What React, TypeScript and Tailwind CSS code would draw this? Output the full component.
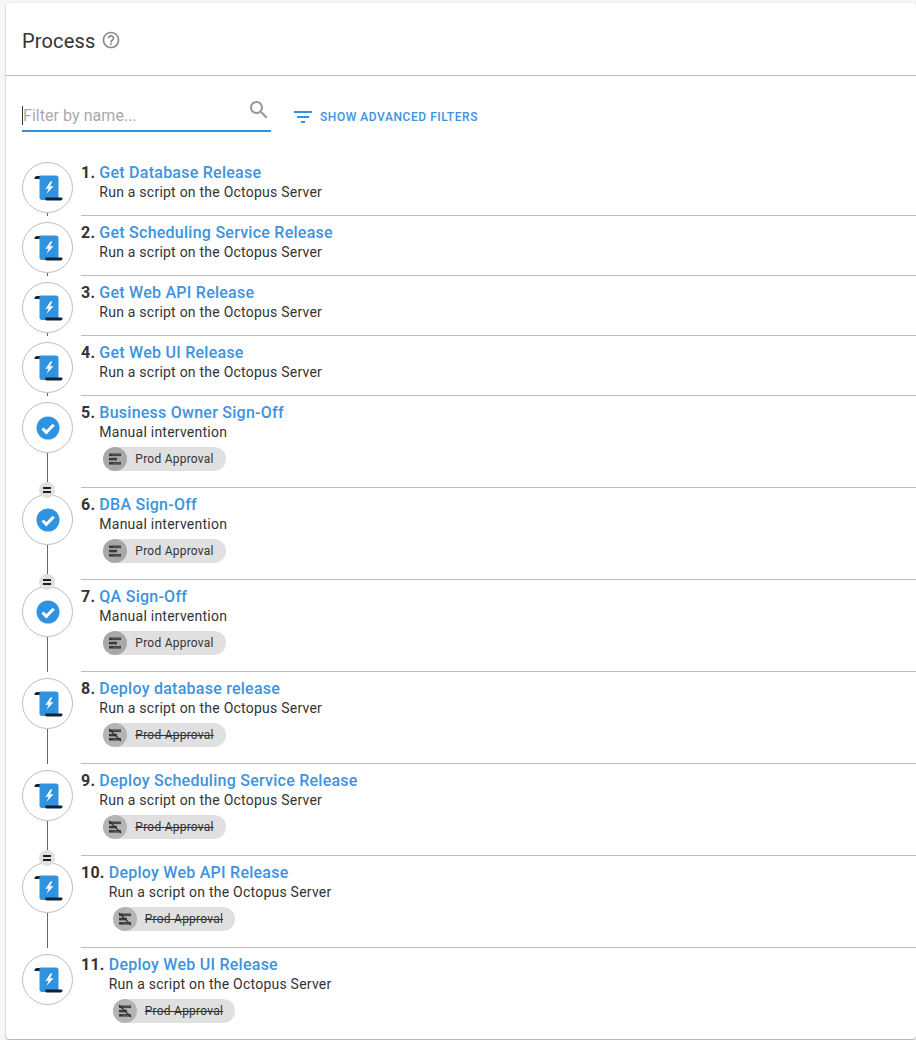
import React from "react";

type Step = { name: string; sub: string; icon: "script" | "manual"; chip?: "on" | "off"; parallel?: boolean };

const SCRIPT = "Run a script on the Octopus Server";
const MANUAL = "Manual intervention";

const steps: Step[] = [
  { name: "Get Database Release", sub: SCRIPT, icon: "script" },
  { name: "Get Scheduling Service Release", sub: SCRIPT, icon: "script" },
  { name: "Get Web API Release", sub: SCRIPT, icon: "script" },
  { name: "Get Web UI Release", sub: SCRIPT, icon: "script" },
  { name: "Business Owner Sign-Off", sub: MANUAL, icon: "manual", chip: "on" },
  { name: "DBA Sign-Off", sub: MANUAL, icon: "manual", chip: "on", parallel: true },
  { name: "QA Sign-Off", sub: MANUAL, icon: "manual", chip: "on", parallel: true },
  { name: "Deploy database release", sub: SCRIPT, icon: "script", chip: "off" },
  { name: "Deploy Scheduling Service Release", sub: SCRIPT, icon: "script", chip: "off" },
  { name: "Deploy Web API Release", sub: SCRIPT, icon: "script", chip: "off", parallel: true },
  { name: "Deploy Web UI Release", sub: SCRIPT, icon: "script", chip: "off" },
];

const ScriptIcon = () => (
  <svg width="30" height="28" viewBox="0 0 30 28">
    <path d="M1.5 4.5C1.5 3 2.5 2 4 2h4v3H1.5z" fill="#0f2535" />
    <path d="M6.5 1.5H23c1.5 0 2.5 1 2.5 2.5v22H9c-1.5 0-2.5-1-2.5-2.5z" fill="#2f93e0" />
    <path d="M12.5 23.5h16l1 .5c0 1.5-.7 2.5-2 2.5H13.5c-1.2 0-1.5-1.5-1-3z" fill="#0f2535" />
    <path d="M17.5 7.5l-5 7.2h3.2l-2.2 5 7-7.4h-3.6l2.6-4.8z" fill="#fff" />
  </svg>
);

const ManualIcon = () => (
  <svg width="24" height="24" viewBox="0 0 24 24">
    <circle cx="12" cy="12" r="11.5" fill="#2f93e0" />
    <path d="M6.5 12.5l3.8 3.8 7.4-7.6" fill="none" stroke="#fff" strokeWidth="3" />
  </svg>
);

const ChipIcon = ({ off }: { off: boolean }) => (
  <svg width="14" height="14" viewBox="0 0 14 14">
    <rect x="1" y="1.5" width="12" height="2.6" fill="#3a3a3a" />
    <rect x="1" y="5.8" width="8" height="2.6" fill="#3a3a3a" />
    <rect x="1" y="10" width="12" height="2.6" fill="#3a3a3a" />
    <rect x="5" y="2.3" width="7.5" height="1" fill="#5c5c5c" />
    <rect x="5" y="10.8" width="7.5" height="1" fill="#5c5c5c" />
    {off && <path d="M1 1l12 12" stroke="#333" strokeWidth="1.3" />}
  </svg>
);

const Chip = ({ off }: { off: boolean }) => (
  <div className="ml-1 mt-[6px] flex h-6 w-fit items-center rounded-full bg-[#e0e0e0] pr-3">
    <div className={`flex h-6 w-6 items-center justify-center rounded-full ${off ? "bg-[#b4b4b4]" : "bg-[#a8a8a8]"}`}>
      <ChipIcon off={off} />
    </div>
    <span className={`ml-2 text-xs tracking-[0.24px] text-[#333] ${off ? "line-through" : ""}`}>Prod Approval</span>
  </div>
);

const StepRow = ({ step, index, last }: { step: Step; index: number; last: boolean }) => (
  <div className="relative flex pl-4">
    <div className="flex w-[51px] shrink-0 flex-col items-center pt-[6px]">
      <div className="z-10 flex h-[51px] w-[51px] shrink-0 items-center justify-center rounded-full border border-[#bdbdbd] bg-white">
        {step.icon === "script" ? <ScriptIcon /> : <ManualIcon />}
      </div>
      {!last && <div className="w-px flex-1 bg-[#666]" />}
    </div>
    {step.parallel && (
      <div className="absolute left-[33px] top-[-6px] z-20 flex h-4 w-4 items-center justify-center rounded-full bg-[#e0e0e0]">
        <div className="flex flex-col gap-[2px]">
          <div className="h-[2px] w-2 bg-[#0f2535]" />
          <div className="h-[2px] w-2 bg-[#0f2535]" />
        </div>
      </div>
    )}
    <div className={`ml-2 flex-1 ${last ? "" : "border-b border-[#bdbdbd]"} pt-[7px] ${step.chip ? "h-[92px]" : "h-[60px]"}`}>
      <div className="flex">
        <span className="mr-1 text-base leading-5 font-bold tracking-[0.25px] text-[#333]">{index + 1}.</span>
        <div>
          <div className="text-base leading-5 font-medium tracking-[0.25px] text-[#3d93e0]">{step.name}</div>
          <div className="text-sm leading-[18px] tracking-[0.235px] text-[#333]">{step.sub}</div>
          {step.chip && <Chip off={step.chip === "off"} />}
        </div>
      </div>
    </div>
  </div>
);

export default function App() {
  return (
    <div className="h-[1040px] overflow-hidden bg-[#f4f6f8] pt-[3px] pl-[6px] font-['Roboto',sans-serif]">
      <div className="h-[1036px] rounded-[4px] bg-white shadow-[0_1px_2px_rgba(0,0,0,0.35)]">
        <div className="flex h-[73px] items-center border-b border-[#bdbdbd] pl-4 pt-1">
          <h1 className="text-xl font-normal tracking-[0.15px] text-[#333]">Process</h1>
          <svg className="mb-[3px] ml-[6px]" width="20" height="20" viewBox="0 0 24 24" fill="#8a8a8a">
            <path d="M11 18h2v-2h-2v2zm1-16C6.48 2 2 6.48 2 12s4.48 10 10 10 10-4.48 10-10S17.52 2 12 2zm0 18c-4.41 0-8-3.59-8-8s3.59-8 8-8 8 3.59 8 8-3.59 8-8 8zm0-14c-2.21 0-4 1.79-4 4h2c0-1.1.9-2 2-2s2 .9 2 2c0 2-3 1.75-3 5h2c0-2.25 3-2.5 3-5 0-2.21-1.79-4-4-4z" />
          </svg>
        </div>
        <div className="flex h-[80px] items-start pl-4 pt-[22px]">
          <div className="relative flex h-[34px] w-[249px] items-center border-b-2 border-[#2f93e0] pt-1">
            <span className="absolute left-0 top-[8px] h-[19px] w-px bg-[#333]" />
            <span className="pl-px text-base tracking-[0.05px] text-[#aaa]">Filter by name...</span>
            <svg className="absolute right-0 top-0" width="24" height="24" viewBox="0 0 24 24" fill="#999">
              <path d="M15.5 14h-.79l-.28-.27C15.41 12.59 16 11.11 16 9.5 16 5.91 13.09 3 9.5 3S3 5.91 3 9.5 5.91 16 9.5 16c1.61 0 3.09-.59 4.23-1.57l.27.28v.79l5 4.99L20.49 19l-4.99-5zm-6 0C7.01 14 5 11.99 5 9.5S7.01 5 9.5 5 14 7.01 14 9.5 11.99 14 9.5 14z" />
            </svg>
          </div>
          <div className="ml-5 mt-[7px] flex items-center">
            <svg width="24" height="24" viewBox="0 0 24 24" fill="#2f93e0">
              <path d="M10 18h4v-2h-4v2zM3 6v2h18V6H3zm3 7h12v-2H6v2z" />
            </svg>
            <span className="ml-[5px] text-xs font-medium tracking-[0.55px] text-[#3d93e0]">SHOW ADVANCED FILTERS</span>
          </div>
        </div>
        {steps.map((s, i) => (
          <StepRow key={s.name} step={s} index={i} last={i === steps.length - 1} />
        ))}
      </div>
    </div>
  );
}
